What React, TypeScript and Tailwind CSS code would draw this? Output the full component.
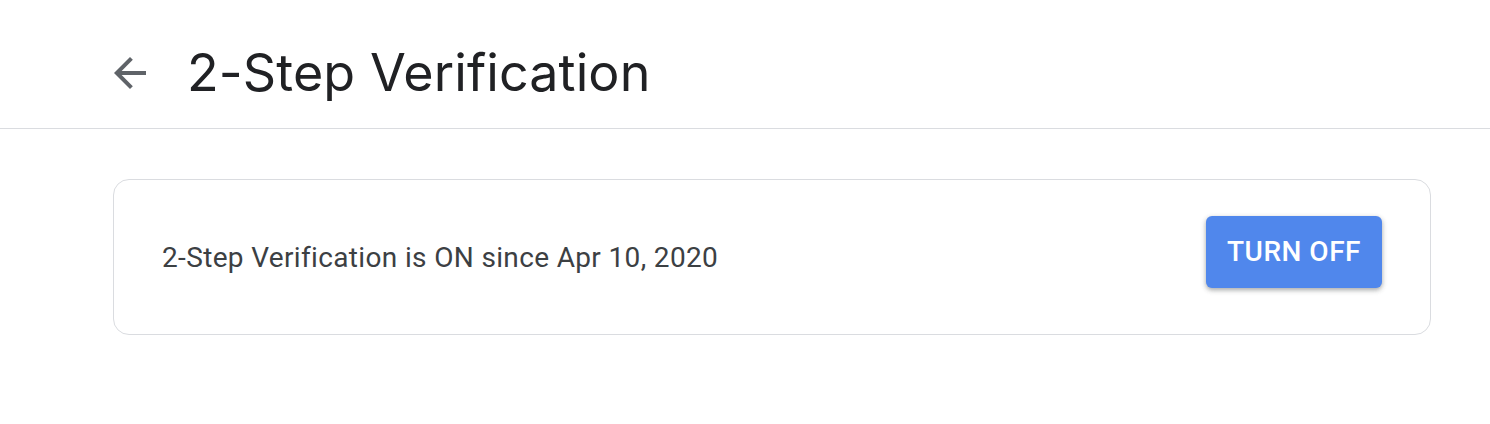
const TITLE_FONT = { fontFamily: 'Inter, "Open Sans", Roboto, sans-serif' };

function ArrowBack() {
  return (
    <svg viewBox="0 0 24 24" className="h-[48px] w-[48px] fill-[#5f6368]">
      <path d="M20 11H7.83l5.59-5.59L12 4l-8 8 8 8 1.41-1.41L7.83 13H20v-2z" />
    </svg>
  );
}

export default function App() {
  return (
    <div className="min-h-[424px] w-full bg-white font-['Roboto',sans-serif]">
      <header className="flex h-[129px] items-start border-b border-[#dadce0] pl-[106px] pt-[49px]">
        <button type="button" aria-label="Back" className="flex h-[48px] w-[48px] items-center justify-center">
          <ArrowBack />
        </button>
        <h1
          style={TITLE_FONT}
          className="ml-[33px] -mt-[8px] text-[52px] leading-[64px] font-normal tracking-[0.1px] text-[#202124]"
        >
          2-Step Verification
        </h1>
      </header>

      <main className="pt-[50px] pl-[113px] pr-[59px]">
        <section className="flex items-center justify-between rounded-[16px] border border-[#dadce0] pt-[36px] pb-[46px] pl-[48px] pr-[48px]">
          <p className="mt-[12px] text-[28px] leading-[36px] tracking-[0.35px] text-[#3c4043]">
            2-Step Verification is ON since Apr 10, 2020
          </p>
          <button
            type="button"
            className="h-[72px] rounded-[6px] bg-[#5087ec] px-[21px] text-[28px] font-medium tracking-[0.5px] text-white shadow-[0_2px_4px_rgba(60,64,67,0.35),0_2px_6px_rgba(60,64,67,0.15)]"
          >
            TURN OFF
          </button>
        </section>
      </main>
    </div>
  );
}
